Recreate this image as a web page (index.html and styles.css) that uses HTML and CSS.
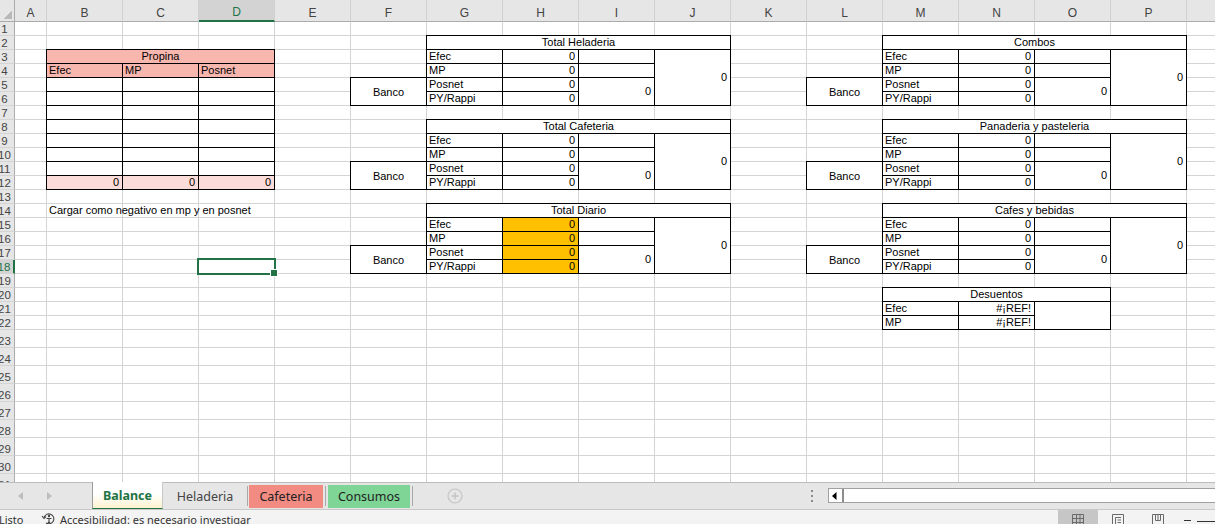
FILE: index.html
```html
<!DOCTYPE html>
<html lang="es">
<head>
    <meta charset="UTF-8">
    <title>Balance</title>
    <link rel="stylesheet" href="styles.css">
</head>
<body>
    <div class="hoja">
        <!-- encabezados de columna -->
        <div class="esquina"></div>
        <div class="col-h">A</div>
        <div class="col-h">B</div>
        <div class="col-h">C</div>
        <div class="col-h sel">D</div>
        <div class="col-h">E</div>
        <div class="col-h">F</div>
        <div class="col-h">G</div>
        <div class="col-h">H</div>
        <div class="col-h">I</div>
        <div class="col-h">J</div>
        <div class="col-h">K</div>
        <div class="col-h">L</div>
        <div class="col-h">M</div>
        <div class="col-h">N</div>
        <div class="col-h">O</div>
        <div class="col-h">P</div>
        <div class="col-h"></div>

        <!-- numeros de fila -->
        <div class="fila-h"><span>1</span></div>
        <div class="fila-h"><span>2</span></div>
        <div class="fila-h"><span>3</span></div>
        <div class="fila-h"><span>4</span></div>
        <div class="fila-h"><span>5</span></div>
        <div class="fila-h"><span>6</span></div>
        <div class="fila-h"><span>7</span></div>
        <div class="fila-h"><span>8</span></div>
        <div class="fila-h"><span>9</span></div>
        <div class="fila-h"><span>10</span></div>
        <div class="fila-h"><span>11</span></div>
        <div class="fila-h"><span>12</span></div>
        <div class="fila-h"><span>13</span></div>
        <div class="fila-h"><span>14</span></div>
        <div class="fila-h"><span>15</span></div>
        <div class="fila-h"><span>16</span></div>
        <div class="fila-h"><span>17</span></div>
        <div class="fila-h sel"><span>18</span></div>
        <div class="fila-h"><span>19</span></div>
        <div class="fila-h"><span>20</span></div>
        <div class="fila-h"><span>21</span></div>
        <div class="fila-h"><span>22</span></div>
        <div class="fila-h"><span>23</span></div>
        <div class="fila-h"><span>24</span></div>
        <div class="fila-h"><span>25</span></div>
        <div class="fila-h"><span>26</span></div>
        <div class="fila-h"><span>27</span></div>
        <div class="fila-h"><span>28</span></div>
        <div class="fila-h"><span>29</span></div>
        <div class="fila-h"><span>30</span></div>
        <div class="fila-h"><span>31</span></div>

        <!-- lineas de la grilla -->
        <div class="lineas chicas"></div>
        <div class="lineas grandes"></div>

        <!-- Propina -->
        <div class="tabla t3 pos-propina">
            <div class="c tit rosa">Propina</div>
            <div class="c rosa">Efec</div>
            <div class="c rosa">MP</div>
            <div class="c rosa">Posnet</div>
            <div class="c"></div><div class="c"></div><div class="c"></div>
            <div class="c"></div><div class="c"></div><div class="c"></div>
            <div class="c"></div><div class="c"></div><div class="c"></div>
            <div class="c"></div><div class="c"></div><div class="c"></div>
            <div class="c"></div><div class="c"></div><div class="c"></div>
            <div class="c"></div><div class="c"></div><div class="c"></div>
            <div class="c"></div><div class="c"></div><div class="c"></div>
            <div class="c num rosa-claro">0</div>
            <div class="c num rosa-claro">0</div>
            <div class="c num rosa-claro">0</div>
        </div>

        <div class="nota">Cargar como negativo en mp y en posnet</div>

        <!-- Total Heladeria -->
        <div class="banco banco-1">Banco</div>
        <div class="tabla t4 pos-helad">
            <div class="c tit">Total Heladeria</div>
            <div class="c">Efec</div><div class="c num">0</div><div class="c"></div><div class="c num r4">0</div>
            <div class="c">MP</div><div class="c num">0</div><div class="c"></div>
            <div class="c">Posnet</div><div class="c num">0</div><div class="c num r2">0</div>
            <div class="c">PY/Rappi</div><div class="c num">0</div>
        </div>

        <!-- Total Cafeteria -->
        <div class="banco banco-2">Banco</div>
        <div class="tabla t4 pos-cafe">
            <div class="c tit">Total Cafeteria</div>
            <div class="c">Efec</div><div class="c num">0</div><div class="c"></div><div class="c num r4">0</div>
            <div class="c">MP</div><div class="c num">0</div><div class="c"></div>
            <div class="c">Posnet</div><div class="c num">0</div><div class="c num r2">0</div>
            <div class="c">PY/Rappi</div><div class="c num">0</div>
        </div>

        <!-- Total Diario -->
        <div class="banco banco-3">Banco</div>
        <div class="tabla t4 pos-diario">
            <div class="c tit">Total Diario</div>
            <div class="c">Efec</div><div class="c num naranja">0</div><div class="c"></div><div class="c num r4">0</div>
            <div class="c">MP</div><div class="c num naranja">0</div><div class="c"></div>
            <div class="c">Posnet</div><div class="c num naranja">0</div><div class="c num r2">0</div>
            <div class="c">PY/Rappi</div><div class="c num naranja">0</div>
        </div>

        <!-- Combos -->
        <div class="banco banco-4">Banco</div>
        <div class="tabla t4 pos-combos">
            <div class="c tit">Combos</div>
            <div class="c">Efec</div><div class="c num">0</div><div class="c"></div><div class="c num r4">0</div>
            <div class="c">MP</div><div class="c num">0</div><div class="c"></div>
            <div class="c">Posnet</div><div class="c num">0</div><div class="c num r2">0</div>
            <div class="c">PY/Rappi</div><div class="c num">0</div>
        </div>

        <!-- Panaderia y pasteleria -->
        <div class="banco banco-5">Banco</div>
        <div class="tabla t4 pos-pana">
            <div class="c tit">Panaderia y pasteleria</div>
            <div class="c">Efec</div><div class="c num">0</div><div class="c"></div><div class="c num r4">0</div>
            <div class="c">MP</div><div class="c num">0</div><div class="c"></div>
            <div class="c">Posnet</div><div class="c num">0</div><div class="c num r2">0</div>
            <div class="c">PY/Rappi</div><div class="c num">0</div>
        </div>

        <!-- Cafes y bebidas -->
        <div class="banco banco-6">Banco</div>
        <div class="tabla t4 pos-bebidas">
            <div class="c tit">Cafes y bebidas</div>
            <div class="c">Efec</div><div class="c num">0</div><div class="c"></div><div class="c num r4">0</div>
            <div class="c">MP</div><div class="c num">0</div><div class="c"></div>
            <div class="c">Posnet</div><div class="c num">0</div><div class="c num r2">0</div>
            <div class="c">PY/Rappi</div><div class="c num">0</div>
        </div>

        <!-- Desuentos -->
        <div class="tabla t3 pos-desc">
            <div class="c tit">Desuentos</div>
            <div class="c">Efec</div><div class="c num">#¡REF!</div><div class="c r2"></div>
            <div class="c">MP</div><div class="c num">#¡REF!</div>
        </div>

        <div class="seleccion"></div>
    </div>

    <div class="pestanas">
        <div class="nav">
            <svg width="6" height="8" viewBox="0 0 6 8"><path d="M5 0 L0 4 L5 8 Z" fill="#bdbdbd"/></svg>
            <svg width="6" height="8" viewBox="0 0 6 8"><path d="M1 0 L6 4 L1 8 Z" fill="#bdbdbd"/></svg>
        </div>
        <div class="tab activa">Balance</div>
        <div class="tab helad">Heladeria</div>
        <div class="sep"></div>
        <div class="tab roja">Cafeteria</div>
        <div class="sep sep-2"></div>
        <div class="tab verde">Consumos</div>
        <div class="sep sep-3"></div>
        <div class="mas">
            <svg width="16" height="16" viewBox="0 0 16 16">
                <circle cx="8" cy="8" r="7" fill="none" stroke="#c4c4c4" stroke-width="1.2"/>
                <path d="M8 4.5 V11.5 M4.5 8 H11.5" stroke="#c4c4c4" stroke-width="1.4"/>
            </svg>
        </div>
        <div class="scroll-zona">
            <div class="puntos">
                <svg width="4" height="14" viewBox="0 0 4 14">
                    <rect x="1" y="1" width="2" height="2" fill="#8a8a8a"/>
                    <rect x="1" y="6" width="2" height="2" fill="#8a8a8a"/>
                    <rect x="1" y="11" width="2" height="2" fill="#8a8a8a"/>
                </svg>
            </div>
            <div class="barra">
                <div class="btn-izq">
                    <svg width="5" height="8" viewBox="0 0 5 8"><path d="M4.5 0 L0 4 L4.5 8 Z" fill="#000"/></svg>
                </div>
            </div>
        </div>
    </div>

    <div class="estado">
        <span class="listo">Listo</span>
        <svg class="acc" width="15" height="14" viewBox="0 0 15 14">
            <path d="M3 5.5 A5 5 0 1 1 5 11" fill="none" stroke="#444" stroke-width="1.1"/>
            <path d="M1 4 L3 6.5 L5 4.5" fill="none" stroke="#444" stroke-width="1.1"/>
            <circle cx="8" cy="4" r="1.2" fill="#444"/>
            <path d="M5.5 6.5 H10.5 M8 6 V9.5 L6.5 12 M8 9.5 L9.5 12" fill="none" stroke="#444" stroke-width="1.1"/>
        </svg>
        <span class="accesib">Accesibilidad: es necesario investigar</span>
        <div class="vistas">
            <div class="vista on">
                <svg width="14" height="14" viewBox="0 0 14 14">
                    <path d="M1.5 4.5 H12.5 V14 M1.5 4.5 V14 M1.5 8.5 H12.5 M1.5 12.5 H12.5 M5.5 4.5 V14 M9 4.5 V14" fill="none" stroke="#6a6a6a" stroke-width="1"/>
                </svg>
            </div>
            <div class="vista">
                <svg width="14" height="14" viewBox="0 0 14 14">
                    <path d="M1.5 4.5 H12.5 V14 M1.5 4.5 V14 M4.5 7.5 V14 M4.5 7.5 H10 M6.5 10 H10 M6.5 12.5 H10" fill="none" stroke="#6a6a6a" stroke-width="1"/>
                </svg>
            </div>
            <div class="vista">
                <svg width="14" height="14" viewBox="0 0 14 14">
                    <path d="M1.5 4.5 H12.5 V14 M1.5 4.5 V14 M7 4.5 V10.5 M4.5 4.5 V10.5 H9.5 V4.5" fill="none" stroke="#6a6a6a" stroke-width="1"/>
                </svg>
            </div>
            <div class="menos"></div>
            <div class="deslizador"></div>
        </div>
    </div>
</body>
</html>
```

FILE: styles.css
```css
* {
    box-sizing: border-box;
}

body {
    margin: 0;
    width: 1215px;
    height: 524px;
    overflow: hidden;
    background: #fff;
    font-family: "Liberation Sans", Arial, sans-serif;
}

/* ---- hoja ---- */
.hoja {
    height: 482px;
    overflow: hidden;
    display: grid;
    grid-template-columns: 15px 32px repeat(16, 76px);
    grid-template-rows: 22px repeat(22, 14px) repeat(9, 18px);
    font-size: 11px;
    color: #000;
}

.esquina {
    background: linear-gradient(135deg, transparent 50%, #b9b9b9 50%) right 2px bottom 2px / 9px 9px no-repeat, #e6e6e6;
    border-right: 1px solid #ababab;
    border-bottom: 1px solid #ababab;
}

.col-h {
    background: #e6e6e6;
    border-right: 1px solid #d0d0d0;
    border-bottom: 1px solid #ababab;
    display: flex;
    align-items: center;
    justify-content: center;
    padding-top: 4px;
    font-size: 12px;
    color: #444;
}

.col-h.sel {
    background: #d3d3d3;
    color: #217346;
    border-bottom: 2px solid #217346;
}

.fila-h {
    grid-column: 1;
    background: #e6e6e6;
    border-right: 1px solid #ababab;
    border-bottom: 1px solid #d4d4d4;
    display: flex;
    justify-content: center;
    align-items: flex-end;
    padding-right: 5px;
    overflow: hidden;
    font-size: 11.5px;
    line-height: 12px;
    color: #444;
}

.fila-h span {
    white-space: nowrap;
}

.fila-h.sel {
    background: #d3d3d3;
    color: #217346;
    border-right: 2px solid #217346;
}

.lineas {
    grid-column: 2 / -1;
    background-image: linear-gradient(to left, #d4d4d4 1px, transparent 1px), linear-gradient(to top, #d4d4d4 1px, transparent 1px);
    background-position: 32px 0, 0 0;
}

.lineas.chicas {
    grid-row: 2 / 24;
    background-size: 76px 100%, 100% 14px;
}

.lineas.grandes {
    grid-row: 24 / -1;
    background-size: 76px 100%, 100% 18px;
}

/* ---- tablas ---- */
.tabla {
    display: grid;
    grid-auto-rows: 14px;
    margin: -1px 0 0 -1px;
    border-top: 1px solid #000;
    border-left: 1px solid #000;
    background: #fff;
}

.t3 {
    grid-template-columns: repeat(3, 76px);
}

.t4 {
    grid-template-columns: repeat(4, 76px);
}

.c {
    border-right: 1px solid #000;
    border-bottom: 1px solid #000;
    padding: 0 2px;
    line-height: 13px;
    white-space: nowrap;
    overflow: hidden;
}

.tit {
    grid-column: 1 / -1;
    text-align: center;
}

.num {
    text-align: right;
    padding-right: 3px;
}

.r4 {
    grid-row: span 4;
    display: flex;
    align-items: center;
    justify-content: flex-end;
}

.r2 {
    grid-row: span 2;
    display: flex;
    align-items: center;
    justify-content: flex-end;
}

.rosa {
    background: #f7b6ae;
}

.rosa-claro {
    background: #fcdcd8;
}

.naranja {
    background: #ffc000;
}

.banco {
    margin: -1px 0 0 -1px;
    border: 1px solid #000;
    background: #fff;
    display: flex;
    align-items: center;
    justify-content: center;
}

.pos-propina { grid-column: 3 / 6; grid-row: 4 / 14; }
.pos-helad { grid-column: 8 / 12; grid-row: 3 / 8; }
.pos-cafe { grid-column: 8 / 12; grid-row: 9 / 14; }
.pos-diario { grid-column: 8 / 12; grid-row: 15 / 20; }
.pos-combos { grid-column: 14 / 18; grid-row: 3 / 8; }
.pos-pana { grid-column: 14 / 18; grid-row: 9 / 14; }
.pos-bebidas { grid-column: 14 / 18; grid-row: 15 / 20; }
.pos-desc { grid-column: 14 / 17; grid-row: 21 / 24; }

.banco-1 { grid-column: 7; grid-row: 6 / 8; }
.banco-2 { grid-column: 7; grid-row: 12 / 14; }
.banco-3 { grid-column: 7; grid-row: 18 / 20; }
.banco-4 { grid-column: 13; grid-row: 6 / 8; }
.banco-5 { grid-column: 13; grid-row: 12 / 14; }
.banco-6 { grid-column: 13; grid-row: 18 / 20; }

.nota {
    grid-column: 3 / 7;
    grid-row: 15;
    padding-left: 2px;
    line-height: 13px;
    white-space: nowrap;
}

.seleccion {
    grid-column: 5;
    grid-row: 19;
    margin: -2px -1px -1px -2px;
    border: 2px solid #217346;
    position: relative;
}

.seleccion::after {
    content: "";
    position: absolute;
    right: -4px;
    bottom: -4px;
    width: 6px;
    height: 6px;
    background: #217346;
    border: 1px solid #fff;
}

/* ---- pestañas ---- */
.pestanas {
    height: 28px;
    display: flex;
    background: #e6e6e6;
    border-top: 1px solid #bcbcbc;
    border-bottom: 1px solid #c8c8c8;
    font-family: "Noto Sans", "Open Sans", sans-serif;
    font-size: 12.5px;
    color: #444;
}

.nav {
    width: 92px;
    display: flex;
    align-items: center;
    gap: 22px;
    padding-left: 18px;
}

.tab {
    display: flex;
    align-items: center;
    justify-content: center;
}

.activa {
    width: 71px;
    margin-top: -1px;
    background: linear-gradient(#fff 45%, #fdf2cf);
    border-left: 1px solid #9b9b9b;
    border-right: 1px solid #c8c8c8;
    border-bottom: 1px solid #217346;
    font-weight: bold;
    color: #217346;
}

.helad {
    width: 84px;
}

.roja {
    width: 74px;
    margin: 2px 0 1px;
    background: #f28b82;
    color: #222;
}

.verde {
    width: 82px;
    margin: 2px 0 1px;
    background: #7ed596;
    color: #222;
}

.sep {
    width: 1px;
    height: 20px;
    align-self: center;
    margin-right: 1px;
    background: #a8a8a8;
}

.sep-2 {
    margin: 0 2px;
}

.sep-3 {
    margin: 0 0 0 2px;
}

.mas {
    margin-left: 34px;
    display: flex;
    align-items: center;
}

.scroll-zona {
    margin-left: auto;
    margin-right: -20px;
    width: 430px;
    display: flex;
}

.puntos {
    width: 14px;
    margin-right: 9px;
    display: flex;
    justify-content: center;
    padding-top: 6px;
}

.barra {
    flex: 1;
    height: 15px;
    margin-top: 5px;
    border: 1px solid #a0a0a0;
    background: #fff;
}

.btn-izq {
    width: 15px;
    height: 100%;
    border-right: 2px solid #8c8c8c;
    display: flex;
    align-items: center;
    padding-left: 3px;
}

/* ---- barra de estado ---- */
.estado {
    height: 14px;
    display: flex;
    background: #f3f3f3;
    font-family: "Noto Sans", "Open Sans", sans-serif;
    font-size: 11px;
    line-height: 14px;
    color: #333;
    overflow: hidden;
}

.listo {
    width: 42px;
    margin-left: -1px;
    padding-top: 3px;
}

.acc {
    margin-top: 2px;
}

.accesib {
    margin-left: 4px;
    padding-top: 3px;
    white-space: nowrap;
}

.vistas {
    margin-left: auto;
    margin-right: -12px;
    display: flex;
}

.vista {
    width: 40px;
    display: flex;
    justify-content: center;
}

.vista.on {
    background: #c6c6c6;
}

.menos {
    width: 7px;
    height: 1px;
    margin: 10px 0 0 6px;
    background: #333;
}

.deslizador {
    width: 30px;
    height: 1px;
    margin: 11px 0 0 6px;
    background: #333;
}
```
